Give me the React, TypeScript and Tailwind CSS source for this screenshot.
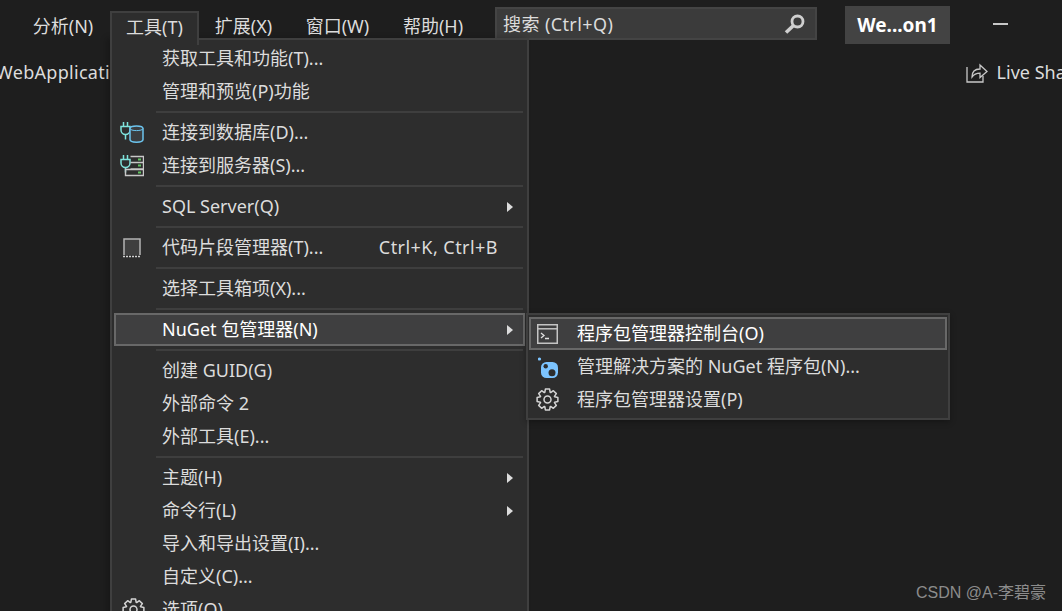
import type { ReactNode } from 'react';

function PlugMark({ color = '#7fe3dc' }: { color?: string }) {
  return (
    <g fill="none" stroke={color} strokeWidth="1.5">
      <path d="M3.5 0v4M7.5 0v4" />
      <path d="M1 4.500h9v3.500a4.500 4.500 0 0 1-9 0z" />
      <path d="M5.500 12.500v5" />
    </g>
  );
}

function DatabaseIcon() {
  return (
    <svg width="24" height="22" viewBox="0 0 24 22">
      <PlugMark />
      <path d="M10 6.500c0-3.500 13-3.500 13 0v11c0 3.500-13 3.500-13 0z" fill="#3a3d40" stroke="#6cc4ee" strokeWidth="1.500" />
      <path d="M10 6.500c0 2.800 13 2.800 13 0" fill="none" stroke="#6cc4ee" strokeWidth="1" />
    </svg>
  );
}

function ServerIcon() {
  return (
    <svg width="24" height="22" viewBox="0 0 24 22">
      <PlugMark />
      <path d="M10.500 1.500h13v6h-13M10.500 7.500h13v6.500h-13M5.500 14.500h18v6h-18z" fill="none" stroke="#c8c8c8" strokeWidth="1.400" />
      <path d="M18 4.500h3M18 10.500h3M18 17.500h3" stroke="#62c462" strokeWidth="2" />
    </svg>
  );
}

function SnippetIcon() {
  return (
    <svg width="18" height="20" viewBox="0 0 18 20">
      <path d="M1 17V1h16v16" fill="#3f3f3f" stroke="#b4b4b4" strokeWidth="1.500" />
      <path d="M0 18.500h18" stroke="#d0d0d0" strokeWidth="1.500" strokeDasharray="2 1" />
    </svg>
  );
}

function ConsoleIcon() {
  return (
    <svg width="21" height="20" viewBox="0 0 21 20">
      <rect x="0.750" y="0.750" width="19.500" height="18.500" fill="none" stroke="#c4c4c4" strokeWidth="1.500" />
      <path d="M1 4.800h19" stroke="#c4c4c4" strokeWidth="1.500" />
      <path d="M4 9l3 2.500-3 2.500M8 14.500h4" fill="none" stroke="#e0e0e0" strokeWidth="1.300" />
    </svg>
  );
}

function NuGetIcon() {
  return (
    <svg width="21" height="22" viewBox="0 0 21 22">
      <circle cx="1.500" cy="3" r="1.600" fill="#7cc4ff" />
      <rect x="3" y="6" width="17" height="16" rx="5.500" fill="#7cc4ff" />
      <circle cx="7.700" cy="10.200" r="2.200" fill="#2d2d2d" />
      <circle cx="14" cy="16.800" r="3.500" fill="#2d2d2d" />
    </svg>
  );
}

// 8 chunky teeth, same gear in both menus
function gearPath() {
  const pts: string[] = [];
  for (let i = 0; i < 8; i++) {
    const a = (i * Math.PI) / 4;
    const steps: [number, number][] = [
      [7.6, -0.36],
      [10.6, -0.2],
      [10.6, 0.2],
      [7.6, 0.36],
    ];
    for (const [r, d] of steps) {
      pts.push(`${(11.5 + r * Math.cos(a + d)).toFixed(2)} ${(11.5 + r * Math.sin(a + d)).toFixed(2)}`);
    }
  }
  return `M${pts.join('L')}Z`;
}

function GearIcon() {
  return (
    <svg width="23" height="23" viewBox="0 0 23 23">
      <path d={gearPath()} fill="none" stroke="#d4d4d4" strokeWidth="1.500" strokeLinejoin="round" />
      <circle cx="11.500" cy="11.500" r="3.500" fill="none" stroke="#d4d4d4" strokeWidth="1.500" />
    </svg>
  );
}

function SearchIcon() {
  return (
    <svg width="21" height="20" viewBox="0 0 21 20">
      <circle cx="13.500" cy="7.500" r="5.500" fill="none" stroke="#cfcfcf" strokeWidth="2.800" />
      <path d="M9.500 11.500L2 18.500" stroke="#cfcfcf" strokeWidth="3.600" />
    </svg>
  );
}

function ShareIcon() {
  return (
    <svg width="22" height="22" viewBox="0 0 22 22">
      <path d="M1 6v15h16v-6" fill="none" stroke="#c8c8c8" strokeWidth="1.300" />
      <path d="M6 16c0-5 3-8 8-8V4l7 6.500-7 6v-4.300c-3 0-6 1-8 3.800z" fill="none" stroke="#c8c8c8" strokeWidth="1.300" />
    </svg>
  );
}

function MenuRow({ icon, iconPad = 'pl-[8px]', label, shortcut, arrow, active }: { icon?: ReactNode; iconPad?: string; label: string; shortcut?: string; arrow?: boolean; active?: boolean }) {
  return (
    <div className={`h-[33px] flex items-center ${active ? 'bg-[#3f3f40] outline-2 -outline-offset-2 outline-[#686868] text-white' : ''}`}>
      <div className={`w-[48px] flex items-center shrink-0 ${iconPad}`}>{icon}</div>
      <span className="flex-1 whitespace-nowrap -mt-[2px]">{label}</span>
      {shortcut && <span className="mr-[27px] whitespace-nowrap tracking-[0.45px] -mt-[2px]">{shortcut}</span>}
      {arrow && <div className="w-0 h-0 mr-[12px] border-y-[5px] border-y-transparent border-l-[6px] border-l-[#dcdcdc]" />}
    </div>
  );
}

function Sep() {
  return (
    <div className="h-[8px] flex items-center pl-[42px] pr-[2px]">
      <div className="h-[2px] w-full bg-[#3e3e3e]" />
    </div>
  );
}

export default function App() {
  return (
    <div className="relative w-[1062px] h-[611px] overflow-hidden bg-[#1e1e1e] text-[#dcdcdc] text-[18px] leading-none font-['Noto_Sans','Noto_Sans_CJK_SC',sans-serif]">
      {/* title bar */}
      <div className="flex items-start h-[50px] pt-[6px] pl-[16px]">
        <div className="flex h-[32px] mt-[5px] shrink-0">
          <div className="w-[94px] pb-[3px] flex items-center justify-center">分析(N)</div>
          <div className="relative z-30 w-[89px] h-[34px] pb-[5px] flex items-center justify-center bg-[#2d2d2d] border-x-2 border-t-2 border-[#3f3f3f]">工具(T)</div>
          <div className="w-[89px] pb-[3px] flex items-center justify-center">扩展(X)</div>
          <div className="w-[99px] pb-[3px] flex items-center justify-center">窗口(W)</div>
          <div className="w-[92px] pb-[3px] flex items-center justify-center">帮助(H)</div>
        </div>
        <div className="ml-[16px] mt-[1px] w-[322px] h-[33px] shrink-0 flex items-center justify-between pl-[6px] pr-[10px] bg-[#3b3b3b] border-2 border-[#444444]">
          <span className="tracking-[0.4px]">搜索 (Ctrl+Q)</span>
          <SearchIcon />
        </div>
        <div className="ml-[28px] w-[105px] h-[38px] shrink-0 flex items-center justify-center bg-[#434343] text-white font-bold text-[19px]">We...on1</div>
        <div className="ml-[43px] mt-[17px] w-[15px] h-[2px] shrink-0 bg-[#c8c8c8]" />
        <div className="ml-[54px] mt-[12px] w-[12px] h-[14px] shrink-0 border-2 border-[#c8c8c8]" />
      </div>

      {/* second toolbar row */}
      <div className="flex items-center h-[44px] -ml-[4px]">
        <span className="whitespace-nowrap tracking-[0.3px]">WebApplication1</span>
        <div className="ml-auto flex items-center gap-[9px] -mr-[21px]">
          <ShareIcon />
          <span className="whitespace-nowrap">Live Share</span>
        </div>
      </div>

      {/* tools menu */}
      <div className="absolute z-20 left-[110px] top-[38px] w-[419px] h-[600px] pt-[2px] px-[2px] bg-[#2d2d2d] border-2 border-[#3f3f3f] shadow-[-4px_0_6px_rgba(0,0,0,0.2)]">
        <MenuRow label="获取工具和功能(T)..." />
        <MenuRow label="管理和预览(P)功能" />
        <Sep />
        <MenuRow icon={<DatabaseIcon />} iconPad="pl-[6px]" label="连接到数据库(D)..." />
        <MenuRow icon={<ServerIcon />} iconPad="pl-[6px]" label="连接到服务器(S)..." />
        <Sep />
        <MenuRow label="SQL Server(Q)" arrow />
        <Sep />
        <MenuRow icon={<SnippetIcon />} iconPad="pl-[9px]" label="代码片段管理器(T)..." shortcut="Ctrl+K, Ctrl+B" />
        <Sep />
        <MenuRow label="选择工具箱项(X)..." />
        <Sep />
        <MenuRow label="NuGet 包管理器(N)" arrow active />
        <Sep />
        <MenuRow label="创建 GUID(G)" />
        <MenuRow label="外部命令 2" />
        <MenuRow label="外部工具(E)..." />
        <Sep />
        <MenuRow label="主题(H)" arrow />
        <MenuRow label="命令行(L)" arrow />
        <MenuRow label="导入和导出设置(I)..." />
        <MenuRow label="自定义(C)..." />
        <MenuRow icon={<GearIcon />} iconPad="pl-[8px]" label="选项(O)..." />
      </div>

      {/* NuGet submenu */}
      <div className="absolute z-30 left-[526px] top-[313px] w-[424px] h-[107px] pt-[2px] px-[1px] bg-[#2d2d2d] border-2 border-[#3f3f3f] shadow-[0_2px_6px_rgba(0,0,0,0.3)]">
        <MenuRow icon={<ConsoleIcon />} iconPad="pl-[8px]" label="程序包管理器控制台(O)" active />
        <MenuRow icon={<NuGetIcon />} iconPad="pl-[9px]" label="管理解决方案的 NuGet 程序包(N)..." />
        <MenuRow icon={<GearIcon />} iconPad="pl-[7px]" label="程序包管理器设置(P)" />
      </div>

      <div className="absolute right-[16px] bottom-[10px] text-[16px] text-[#8c8c8c] z-40 font-['Liberation_Sans','Noto_Sans_CJK_SC',sans-serif]">CSDN @A-李碧豪</div>
    </div>
  );
}
